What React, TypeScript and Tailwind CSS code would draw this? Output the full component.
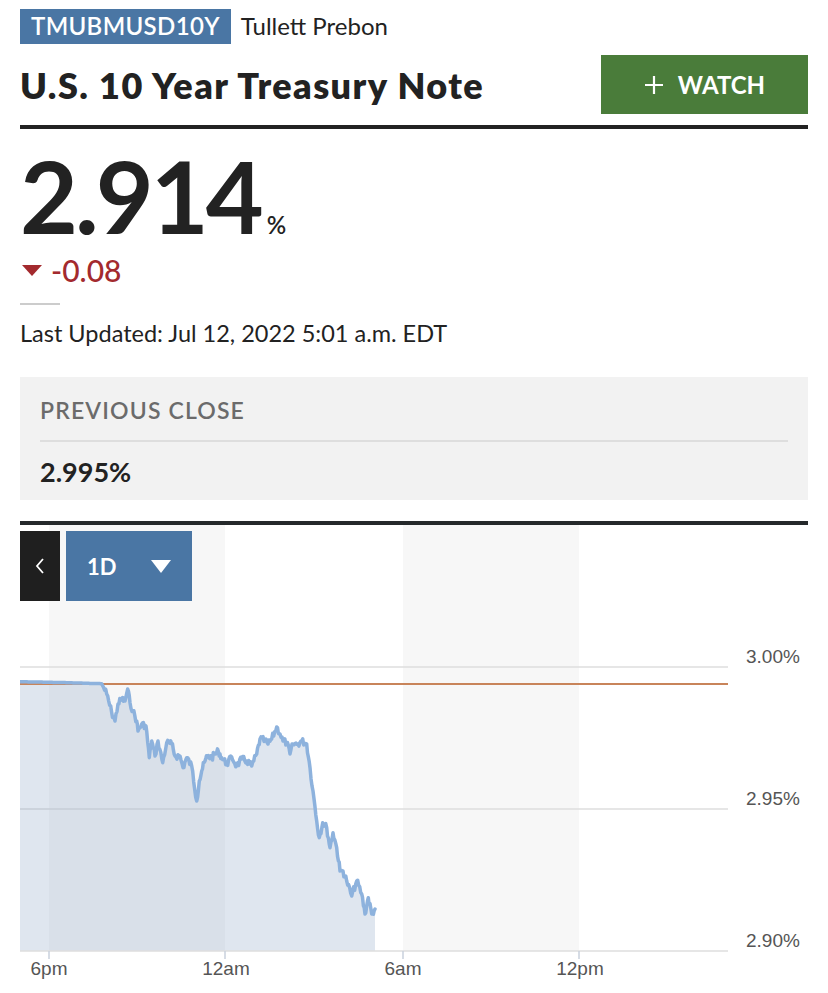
import React from "react";

const KEY: [number, number][] = [
  [20, 680.7], [60, 681.5], [101.7, 682.7], [106.7, 693], [111.7, 711.7], [115, 720], [118, 703], [121.7, 698],
  [125, 700], [127.7, 688], [130, 701.7], [133, 710], [136.7, 720], [138, 730], [141.7, 723], [146, 725],
  [149.3, 756.7], [151.7, 740], [155, 755], [158, 740], [162.7, 761.7], [166.7, 741.7], [171.7, 743],
  [175, 755], [180, 755], [183, 766.7], [186.7, 756.7], [191.7, 765], [196.7, 800], [199.3, 780], [201.7, 770],
  [205, 760], [207.3, 755], [211.7, 756.7], [215, 753], [218.3, 750], [221.7, 756.7], [226.7, 763],
  [231.7, 756], [236.7, 765], [241.7, 758], [246.7, 760], [251.7, 765], [256.7, 753], [260, 738],
  [265, 740], [268, 743], [271.7, 738], [276.7, 726], [280, 733], [283, 740], [286.7, 741.7], [290, 753],
  [293, 743], [298, 743], [301.7, 740], [306.7, 743], [310, 766.7], [313, 790], [316.7, 820], [319.3, 836.7],
  [322.7, 821.7], [326.7, 826.7], [330, 846.7], [333, 831.7], [336.7, 846.7], [340, 870], [343, 870],
  [346.7, 880], [351.7, 895], [356.7, 880], [361.7, 893], [365, 913], [368.3, 896.7], [371.7, 913], [375, 908],
];

function buildPoints(): [number, number][] {
  const out: [number, number][] = [];
  let seed = 7;
  const rnd = () => {
    seed = (seed * 9301 + 49297) % 233280;
    return seed / 233280;
  };
  for (let i = 0; i < KEY.length - 1; i++) {
    const [x0, y0] = KEY[i];
    const [x1, y1] = KEY[i + 1];
    const n = Math.max(1, Math.ceil((x1 - x0) / 1.0));
    for (let k = 0; k < n; k++) {
      const t = k / n;
      const x = x0 + (x1 - x0) * t;
      let y = y0 + (y1 - y0) * t;
      if (x > 103 && k > 0) y += (rnd() - 0.5) * 7;
      out.push([x - 20, y - 524]);
    }
  }
  const last = KEY[KEY.length - 1];
  out.push([last[0] - 20, last[1] - 524]);
  return out;
}

const PTS = buildPoints();
const LINE = PTS.map((p, i) => `${i === 0 ? "M" : "L"}${p[0].toFixed(1)},${p[1].toFixed(1)}`).join(" ");
const AREA = `${LINE} L${PTS[PTS.length - 1][0].toFixed(1)},426 L0,426 Z`;

function Chart() {
  const axis = { fontFamily: "'Liberation Sans', Arial, sans-serif", fontSize: 19, fill: "#555" };
  return (
    <div className="relative h-[469px] w-full">
      <svg width="788" height="469" viewBox="0 0 788 469" className="block">
        <rect x="29" y="0" width="176" height="426" fill="#f7f7f7" />
        <rect x="383" y="0" width="176" height="426" fill="#f7f7f7" />
        <line x1="0" y1="142" x2="708" y2="142" stroke="#dedede" strokeWidth="1.5" />
        <line x1="0" y1="284" x2="708" y2="284" stroke="#dedede" strokeWidth="1.5" />
        <path d={AREA} fill="#7f9cc0" fillOpacity="0.25" />
        <line x1="0" y1="426" x2="708" y2="426" stroke="#dedede" strokeWidth="1.5" />
        <line x1="0" y1="159" x2="708" y2="159" stroke="#c8845a" strokeWidth="2" />
        <path d={LINE} fill="none" stroke="#8db2dd" strokeWidth="3.5" strokeLinejoin="round" strokeLinecap="round" />
        {[29, 205, 383, 559].map((x) => (
          <line key={x} x1={x} y1="426" x2={x} y2="434" stroke="#c9d1dd" strokeWidth="1.5" />
        ))}
        <text x="726" y="138" {...axis}>3.00%</text>
        <text x="726" y="280" {...axis}>2.95%</text>
        <text x="726" y="422" {...axis}>2.90%</text>
        <text x="29" y="450" textAnchor="middle" {...axis}>6pm</text>
        <text x="206" y="450" textAnchor="middle" {...axis}>12am</text>
        <text x="383" y="450" textAnchor="middle" {...axis}>6am</text>
        <text x="560" y="450" textAnchor="middle" {...axis}>12pm</text>
      </svg>
      <div className="absolute left-0 top-[6px] flex gap-[6px]">
        <div className="flex h-[70px] w-[40px] items-center justify-center bg-[#1f1f1f]">
          <svg width="12" height="20" viewBox="0 0 12 20">
            <polyline points="9,3 3,10 9,17" fill="none" stroke="#fff" strokeWidth="1.8" />
          </svg>
        </div>
        <div className="flex h-[70px] w-[126px] items-center bg-[#4a76a4] pl-[21px] text-white">
          <span className="text-[22px] font-bold">1D</span>
          <svg width="20" height="13" viewBox="0 0 20 13" className="ml-[34px]">
            <polygon points="0,0 20,0 10,13" fill="#fff" />
          </svg>
        </div>
      </div>
    </div>
  );
}

export default function App() {
  return (
    <div className="min-h-[993px] w-[828px] bg-white px-5 font-[family-name:Lato,sans-serif] text-[#222]">
      <div className="flex items-center pt-[8px]">
        <div className="flex h-[35px] items-center bg-[#4a76a4] px-[11px] text-[24px] font-semibold tracking-[0.015em] text-white">
          TMUBMUSD10Y
        </div>
        <span className="ml-[10px] text-[24px]">Tullett Prebon</span>
      </div>
      <div className="mt-[11px] flex h-[59px] items-center justify-between">
        <h1 className="text-[36px] font-extrabold leading-none tracking-[0.04em]">U.S. 10 Year Treasury Note</h1>
        <button className="flex h-[59px] w-[207px] items-center justify-center gap-[14px] bg-[#4a7c3a] text-white">
          <svg width="20" height="20" viewBox="0 0 20 20">
            <path d="M10 1 V19 M1 10 H19" stroke="#fff" strokeWidth="2.2" />
          </svg>
          <span className="text-[24px] font-bold leading-none">WATCH</span>
        </button>
      </div>
      <div className="mt-[11px] h-[4px] bg-[#222]" />
      <div className="mt-[16px] flex h-[100px] items-baseline">
        <span className="text-[100px] font-bold leading-[100px] tracking-[-0.03em]">2.914</span>
        <span className="ml-[6px] text-[24px] font-semibold leading-none">%</span>
      </div>
      <div className="mt-[11px] flex items-center text-[30px] font-medium leading-[28px] text-[#a32a2e]">
        <svg width="20" height="11" viewBox="0 0 20 11" className="ml-[2px] mt-[1px]">
          <polygon points="0,0 20,0 10,11" fill="#a32a2e" />
        </svg>
        <span className="ml-[9px]">-0.08</span>
      </div>
      <div className="mt-[19px] h-[2px] w-[40px] bg-[#cccccc]" />
      <div className="mt-[15px] text-[23.5px] leading-[26px]">Last Updated: Jul 12, 2022 5:01 a.m. EDT</div>
      <div className="mt-[31px] h-[123px] bg-[#f2f2f2] px-5 pt-[20px]">
        <div className="text-[23px] font-semibold leading-[26px] tracking-[0.05em] text-[#6b6b6b]">PREVIOUS CLOSE</div>
        <div className="mt-[17px] h-[2px] bg-[#dedede]" />
        <div className="mt-[15px] text-[27px] font-bold leading-[30px]">2.995%</div>
      </div>
      <div className="mt-[21px] h-[4px] bg-[#25292b]" />
      <Chart />
    </div>
  );
}
